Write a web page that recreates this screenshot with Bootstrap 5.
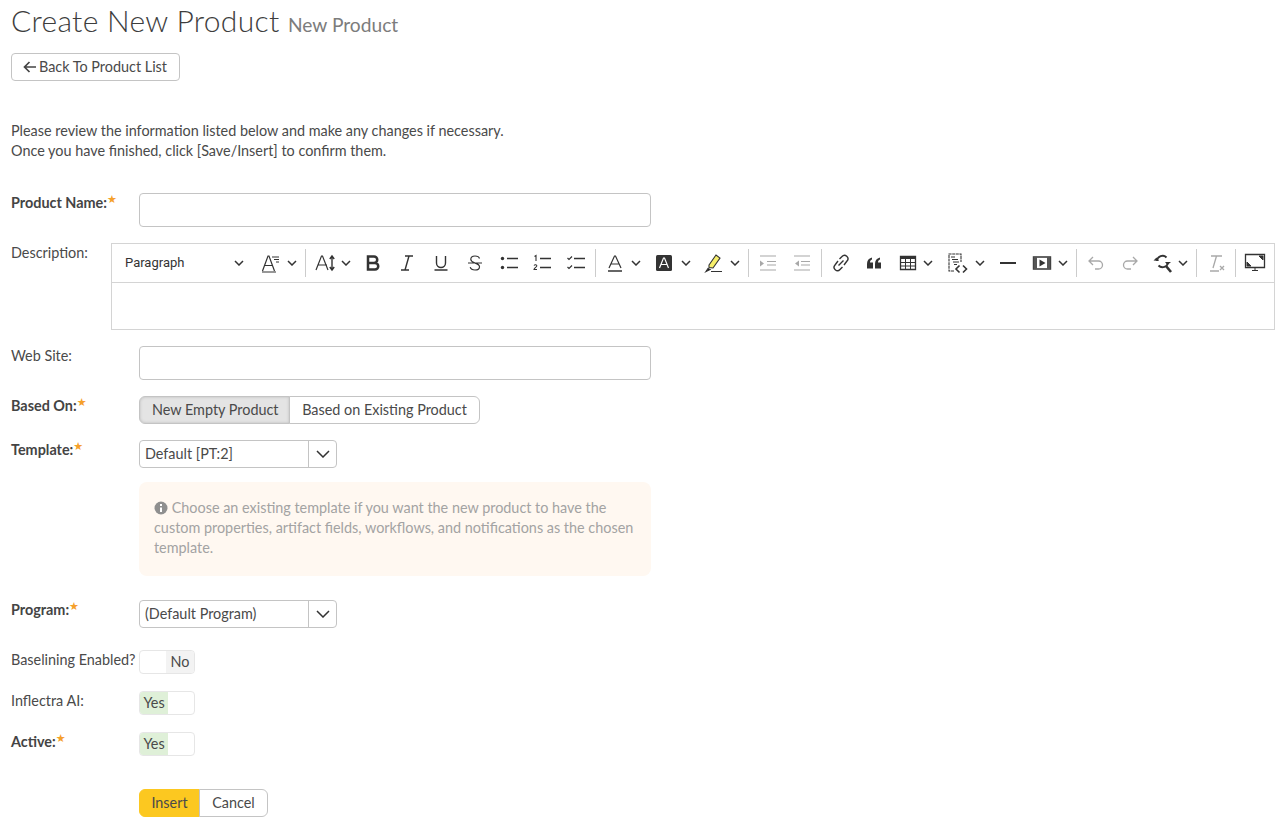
<!DOCTYPE html>
<html lang="en">
<head>
<meta charset="UTF-8">
<title>Create New Product</title>
<link href="https://cdn.jsdelivr.net/npm/bootstrap@5.3.0/dist/css/bootstrap.min.css" rel="stylesheet">
<style>
body { font-family: "Lato", sans-serif; font-size: 14.4px; line-height: 20px; color: #4a4a4a; background: #fff; padding: 0 13px 0 11px; }
.page-title { font-size: 30px; font-weight: 300; line-height: 36px; margin: 2px 0 10px; color: #3d3d3d; letter-spacing: .3px; }
.page-title small { font-size: 19.2px; font-weight: 400; color: #7c7c7c; letter-spacing: 0; }
.btn-plain { font-size: 14.4px; line-height: 20px; padding: 3px 11px; height: 28px; color: #4a4a4a; background: #fff; border: 1px solid #c4c4c4; border-radius: 4px; }
.btn-plain:hover { background: #fff; border-color: #c4c4c4; color: #4a4a4a; }
.back-btn { width: 169px; white-space: nowrap; display: flex; align-items: center; gap: 2px; }
.intro { margin: 40px 0 32px; }
.field-row { display: flex; align-items: flex-start; }
.field-label { width: 128px; flex: none; white-space: nowrap; }
.req { font-weight: 700; color: #444; }
.req-star { color: #f5a02a; font: 11px/1 "DejaVu Sans", sans-serif; vertical-align: 5px; font-weight: 400; }
.text-field { width: 512px; height: 34px; border: 1px solid #c4c4c4; border-radius: 4px; box-shadow: none; }
.editor { flex: 1; border: 1px solid #d4d4d4; margin-left: -28px; height: 87px; background: #fff; }
.editor-bar { height: 39px; border-bottom: 1px solid #d4d4d4; display: flex; align-items: center; padding-left: 4px; font-family: "Roboto", sans-serif; color: #333; }
.tool { width: 33.8px; height: 28px; flex: none; display: flex; align-items: center; justify-content: center; }
.tool-drop { width: 49.3px; height: 28px; flex: none; display: flex; align-items: center; justify-content: flex-start; padding-left: 7px; gap: 2px; }
.tool-drop .chev { margin-left: auto; margin-right: 6px; }
.tool-drop.size-drop { width: 48.3px; }
.tool-drop.table-drop { width: 48px; }
.tool-drop.code-drop { width: 52px; }
.tool-drop.find-drop { width: 47.4px; padding-left: 5px; }
.tool-para { width: 138px; height: 28px; flex: none; display: flex; align-items: center; padding-left: 9px; font-size: 13px; }
.tool-para .chev { margin-left: auto; margin-right: 10px; }
.tool-sep { width: 1px; height: 28px; background: #ccc; flex: none; margin: 0 2px; }
.off { opacity: .42; }
.choice .btn { font-size: 14.4px; line-height: 20px; height: 28px; padding: 3px 12px; color: #4a4a4a; border-color: #c4c4c4; background: #fff; white-space: nowrap; }
.choice .btn.picked { background: #e4e4e4; box-shadow: inset 0 0 3px #bbb; width: 151px; }
.choice .btn.other { width: 191px; }
.pick-box { width: 198px; height: 28px; border: 1px solid #c4c4c4; border-radius: 4px; display: flex; align-items: center; background: #fff; }
.pick-box span { flex: 1; padding-left: 5px; white-space: nowrap; }
.pick-box i { width: 28px; height: 26px; border-left: 1px solid #c4c4c4; display: flex; align-items: center; justify-content: center; }
.hint-box { width: 512px; height: 94px; margin: 14px 0 24px 128px; padding: 16px 8px 16px 15px; background: #fff8f1; border-radius: 8px; color: #a3a3a3; }
.hint-box svg { vertical-align: -2px; }
.program-row { margin-bottom: 21px; }
.flip-row { margin-bottom: 16px; }
.flip-row .field-label { padding-top: 1px; }
.flip-row.last-flip { margin-bottom: 0; }
.flip { width: 56px; height: 24px; border: 1px solid #e6e6e6; border-radius: 4px; display: flex; overflow: hidden; margin-top: 1px; background: #fff; line-height: 22px; }
.flip span { width: 28px; text-align: center; flex: none; }
.flip .no { background: #f3f3f3; margin-left: auto; }
.flip .yes { background: #dff0d8; }
.form-actions { margin: 33px 0 0 128px; }
.form-actions .btn { font-size: 14.4px; line-height: 20px; height: 28px; padding: 3px 0; color: #4a4a4a; white-space: nowrap; }
.form-actions .go { width: 61px; background: #fcc820; border: 1px solid #fcc820; }
.form-actions .stop { width: 69px; background: #fff; border: 1px solid #c4c4c4; }
</style>
</head>
<body>
<h1 class="page-title">Create New Product <small>New Product</small></h1>
<button type="button" class="btn btn-plain back-btn">
  <svg width="14" height="12" viewBox="0 0 14 12"><path d="M6.5 1 1.5 6l5 5M1.5 6H13" fill="none" stroke="#444" stroke-width="1.7"/></svg>Back To Product List
</button>
<p class="intro">Please review the information listed below and make any changes if necessary.<br>Once you have finished, click [Save/Insert] to confirm them.</p>

<div class="field-row mb-3">
  <div class="field-label req">Product Name:<span class="req-star">★</span></div>
  <input type="text" class="form-control text-field">
</div>

<div class="field-row mb-3">
  <div class="field-label">Description:</div>
  <div class="editor">
    <div class="editor-bar">
      <div class="tool-para">Paragraph<svg class="chev" width="10" height="6" viewBox="0 0 10 6"><path d="M1 1l4 4 4-4" fill="none" stroke="#333" stroke-width="1.5"/></svg></div>
      <div class="tool-drop"><svg width="22" height="20" viewBox="0 0 22 20"><path d="M1.500 18 7 3h1l5.500 15M3.500 12.500h8M1 19h14" fill="none" stroke="#333" stroke-width="1.200"/><path d="M11 4h7M13 6.500h5M15 9h3" stroke="#333" stroke-width="1"/></svg><svg class="chev" width="10" height="6" viewBox="0 0 10 6"><path d="M1 1l4 4 4-4" fill="none" stroke="#333" stroke-width="1.5"/></svg></div>
      <div class="tool-sep"></div>
      <div class="tool-drop size-drop"><svg width="22" height="20" viewBox="0 0 22 20"><path d="M1 17 6.500 3h1L13 17M3 12h9" fill="none" stroke="#333" stroke-width="1.200"/><path d="M17 4v12M14.800 6 17 3l2.200 3M14.800 14l2.200 3 2.200-3" fill="none" stroke="#333" stroke-width="1.400"/></svg><svg class="chev" width="10" height="6" viewBox="0 0 10 6"><path d="M1 1l4 4 4-4" fill="none" stroke="#333" stroke-width="1.5"/></svg></div>
      <div class="tool"><svg width="20" height="20" viewBox="0 0 20 20"><path d="M5 3.500h6a3.200 3.200 0 0 1 0 6.500H5zM5 10h7a3.200 3.200 0 0 1 0 6.500H5z" fill="none" stroke="#333" stroke-width="2.500"/></svg></div>
      <div class="tool"><svg width="20" height="20" viewBox="0 0 20 20"><path d="M8 3h8M4 17h8M12 3 8 17" fill="none" stroke="#333" stroke-width="1.400"/></svg></div>
      <div class="tool"><svg width="20" height="20" viewBox="0 0 20 20"><path d="M5.500 3v7a4.500 4.500 0 0 0 9 0V3M3.500 17h13" fill="none" stroke="#333" stroke-width="1.400"/></svg></div>
      <div class="tool"><svg width="20" height="20" viewBox="0 0 20 20"><path d="M14.500 5.500C14 3.500 12 3 10 3 7.500 3 5.800 4.200 5.800 6.200 5.800 8.500 8 9.200 10 10c2.300.8 4.500 1.500 4.500 3.700S12.500 17 10 17c-2.200 0-4.200-.8-4.800-2.800M3 10h14" fill="none" stroke="#333" stroke-width="1.200"/></svg></div>
      <div class="tool"><svg width="20" height="20" viewBox="0 0 20 20"><circle cx="3.500" cy="5.500" r="1.700" fill="#333"/><circle cx="3.500" cy="14.500" r="1.700" fill="#333"/><path d="M8 5.500h11M8 14.500h11" stroke="#333" stroke-width="1.500"/></svg></div>
      <div class="tool"><svg width="20" height="20" viewBox="0 0 20 20"><path d="M2.500 3.500 4 2.500V8" fill="none" stroke="#333" stroke-width="1.100"/><path d="M2 12.500c1-1.300 3-.8 2.800.5-.2 1-2.600 2-2.800 3.500h3" fill="none" stroke="#333" stroke-width="1.100"/><path d="M8 5.500h11M8 14.500h11" stroke="#333" stroke-width="1.500"/></svg></div>
      <div class="tool"><svg width="20" height="20" viewBox="0 0 20 20"><path d="m1.500 5 1.500 1.500L6 3.500M1.500 14l1.500 1.500 3-3" fill="none" stroke="#333" stroke-width="1.200"/><path d="M8 5.500h11M8 14.500h11" stroke="#333" stroke-width="1.500"/></svg></div>
      <div class="tool-sep"></div>
      <div class="tool-drop"><svg width="20" height="20" viewBox="0 0 20 20"><path d="M4 15 9.500 3h1L16 15M6 11h8" fill="none" stroke="#333" stroke-width="1.200"/><path d="M3 18h14" stroke="#333" stroke-width="1.500"/></svg><svg class="chev" width="10" height="6" viewBox="0 0 10 6"><path d="M1 1l4 4 4-4" fill="none" stroke="#333" stroke-width="1.500"/></svg></div>
      <div class="tool-drop"><svg width="20" height="20" viewBox="0 0 20 20"><rect x="2" y="2" width="16" height="16" rx="1.500" fill="#333"/><path d="M5.500 15 9.500 5h1l4 10M7 11.500h6" fill="none" stroke="#fff" stroke-width="1.200"/></svg><svg class="chev" width="10" height="6" viewBox="0 0 10 6"><path d="M1 1l4 4 4-4" fill="none" stroke="#333" stroke-width="1.500"/></svg></div>
      <div class="tool-drop"><svg width="20" height="20" viewBox="0 0 20 20"><path d="m5 12 7-10 4 3-7 10-4-.5z" fill="#f7ef6a" stroke="#333" stroke-width="1.100"/><path d="m2 18.500 2-3 2 1zM7 18.500h11" stroke="#333" stroke-width="1.200"/></svg><svg class="chev" width="10" height="6" viewBox="0 0 10 6"><path d="M1 1l4 4 4-4" fill="none" stroke="#333" stroke-width="1.500"/></svg></div>
      <div class="tool-sep"></div>
      <div class="tool off"><svg width="20" height="20" viewBox="0 0 20 20"><path d="M2 3h16M9 8.500h9M9 12h9M2 17h16" stroke="#333" stroke-width="1.200"/><path d="M2 7.500v6l4-3z" fill="#333"/></svg></div>
      <div class="tool off"><svg width="20" height="20" viewBox="0 0 20 20"><path d="M2 3h16M9 8.500h9M9 12h9M2 17h16" stroke="#333" stroke-width="1.200"/><path d="M7 7.500v6l-4-3z" fill="#333"/></svg></div>
      <div class="tool-sep"></div>
      <div class="tool"><svg width="20" height="20" viewBox="0 0 20 20"><path d="m8.500 6 2.500-2.500a3.300 3.300 0 0 1 5 4.500l-3 4M11.500 14 9 16.500a3.300 3.300 0 0 1-5-4.500l3-4M7.500 12.500l5-5" fill="none" stroke="#333" stroke-width="1.400"/></svg></div>
      <div class="tool"><svg width="20" height="20" viewBox="0 0 20 20"><path d="M3 15.500V11c0-3.500 1.500-5.500 5-6.500v2C6.500 7 6 8 6 9.500h3v6zM11 15.500V11c0-3.500 1.500-5.500 5-6.500v2c-1.500.5-2 1.500-2 3h3v6z" fill="#333"/></svg></div>
      <div class="tool-drop table-drop"><svg width="20" height="20" viewBox="0 0 20 20"><path d="M2.500 3.500h15v13h-15z" fill="none" stroke="#333" stroke-width="1.300"/><path d="M2.500 3.500h15v2.500h-15z" fill="#333"/><path d="M2.500 9.500h15M2.500 13h15M7.500 6v10M12.500 6v10" stroke="#333" stroke-width="1"/></svg><svg class="chev" width="10" height="6" viewBox="0 0 10 6"><path d="M1 1l4 4 4-4" fill="none" stroke="#333" stroke-width="1.500"/></svg></div>
      <div class="tool-drop code-drop"><svg width="22" height="22" viewBox="0 0 22 22"><path d="M8 19H3V2h12v8" fill="none" stroke="#333" stroke-width="1.100" stroke-dasharray="3 .6"/><path d="M5 5h4M6 7.500h6M7 10h6M8 12.500h3" stroke="#333" stroke-width="1"/><path d="M13.500 13.500l-3.500 3.500 3.500 3.500M17 13.500l3.500 3.500-3.500 3.500" fill="none" stroke="#333" stroke-width="1.600"/></svg><svg class="chev" width="10" height="6" viewBox="0 0 10 6"><path d="M1 1l4 4 4-4" fill="none" stroke="#333" stroke-width="1.500"/></svg></div>
      <div class="tool"><svg width="20" height="20" viewBox="0 0 20 20"><path d="M2 10h16" stroke="#333" stroke-width="2"/></svg></div>
      <div class="tool-drop"><svg width="20" height="20" viewBox="0 0 20 20"><path d="M1.500 4h17v12h-17z" fill="none" stroke="#333" stroke-width="1.400"/><path d="M1.500 4H5v12H1.500zM15 4h3.500v12H15z" fill="#555"/><path d="m7.500 6.500 6 3.500-6 3.500z" fill="#333"/></svg><svg class="chev" width="10" height="6" viewBox="0 0 10 6"><path d="M1 1l4 4 4-4" fill="none" stroke="#333" stroke-width="1.500"/></svg></div>
      <div class="tool-sep"></div>
      <div class="tool off"><svg width="20" height="20" viewBox="0 0 20 20"><path d="M7 4 3 8l4 4M3 8h9.500a4 4 0 0 1 0 8H9" fill="none" stroke="#333" stroke-width="1.300"/></svg></div>
      <div class="tool off"><svg width="20" height="20" viewBox="0 0 20 20"><path d="m13 4 4 4-4 4M17 8H7.500a4 4 0 0 0 0 8H11" fill="none" stroke="#333" stroke-width="1.300"/></svg></div>
      <div class="tool-drop find-drop"><svg width="22" height="20" viewBox="0 0 22 20"><path d="M5 8a5.500 5.500 0 0 1 9.500-3.500M16 9a5.500 5.500 0 0 1-9.500 3.500" fill="none" stroke="#333" stroke-width="1.900"/><path d="m14 13 5 6" stroke="#333" stroke-width="2.600"/><path d="m1.500 7.500 3-3 2.500 3.500zM19 9l-3.500 3L13 9z" fill="#333"/></svg><svg class="chev" width="10" height="6" viewBox="0 0 10 6"><path d="M1 1l4 4 4-4" fill="none" stroke="#333" stroke-width="1.500"/></svg></div>
      <div class="tool-sep"></div>
      <div class="tool off"><svg width="20" height="20" viewBox="0 0 20 20"><path d="M5 3h11M10.500 3 7 15M4 18h9" fill="none" stroke="#333" stroke-width="1.300"/><path d="m14 13 4 4M18 13l-4 4" stroke="#333" stroke-width="1.300"/></svg></div>
      <div class="tool-sep"></div>
      <div class="tool"><svg width="22" height="22" viewBox="0 0 22 22"><path d="M1.500 2.500h19v13h-19z" fill="none" stroke="#333" stroke-width="1.300"/><path d="M3 14v-4l4 4zM19 4v4l-4-4zM8 18.500h6M11 16v2.500" fill="#333" stroke="#333"/></svg></div>
    </div>
  </div>
</div>

<div class="field-row mb-3">
  <div class="field-label">Web Site:</div>
  <input type="text" class="form-control text-field">
</div>

<div class="field-row mb-3">
  <div class="field-label req">Based On:<span class="req-star">★</span></div>
  <div class="btn-group choice">
    <button type="button" class="btn picked">New Empty Product</button>
    <button type="button" class="btn other">Based on Existing Product</button>
  </div>
</div>

<div class="field-row">
  <div class="field-label req">Template:<span class="req-star">★</span></div>
  <div class="pick-box"><span>Default [PT:2]</span><i><svg width="14" height="8" viewBox="0 0 14 8"><path d="m1 1 6 6 6-6" fill="none" stroke="#333" stroke-width="1.500"/></svg></i></div>
</div>
<div class="hint-box"><svg width="14" height="14" viewBox="0 0 14 14"><circle cx="7" cy="7" r="6.500" fill="#8f8f8f"/><path d="M7 3v2M7 6.500V11" stroke="#fff" stroke-width="2"/></svg> Choose an existing template if you want the new product to have the custom properties, artifact fields, workflows, and notifications as the chosen template.</div>

<div class="field-row program-row">
  <div class="field-label req">Program:<span class="req-star">★</span></div>
  <div class="pick-box"><span>(Default Program)</span><i><svg width="14" height="8" viewBox="0 0 14 8"><path d="m1 1 6 6 6-6" fill="none" stroke="#333" stroke-width="1.500"/></svg></i></div>
</div>

<div class="field-row flip-row">
  <div class="field-label">Baselining Enabled?</div>
  <div class="flip"><span class="no">No</span></div>
</div>
<div class="field-row flip-row">
  <div class="field-label">Inflectra AI:</div>
  <div class="flip"><span class="yes">Yes</span></div>
</div>
<div class="field-row flip-row last-flip">
  <div class="field-label req">Active:<span class="req-star">★</span></div>
  <div class="flip"><span class="yes">Yes</span></div>
</div>

<div class="btn-group form-actions">
  <button type="button" class="btn go">Insert</button>
  <button type="button" class="btn stop">Cancel</button>
</div>
<script src="https://cdn.jsdelivr.net/npm/bootstrap@5.3.0/dist/js/bootstrap.bundle.min.js"></script>
</body>
</html>
